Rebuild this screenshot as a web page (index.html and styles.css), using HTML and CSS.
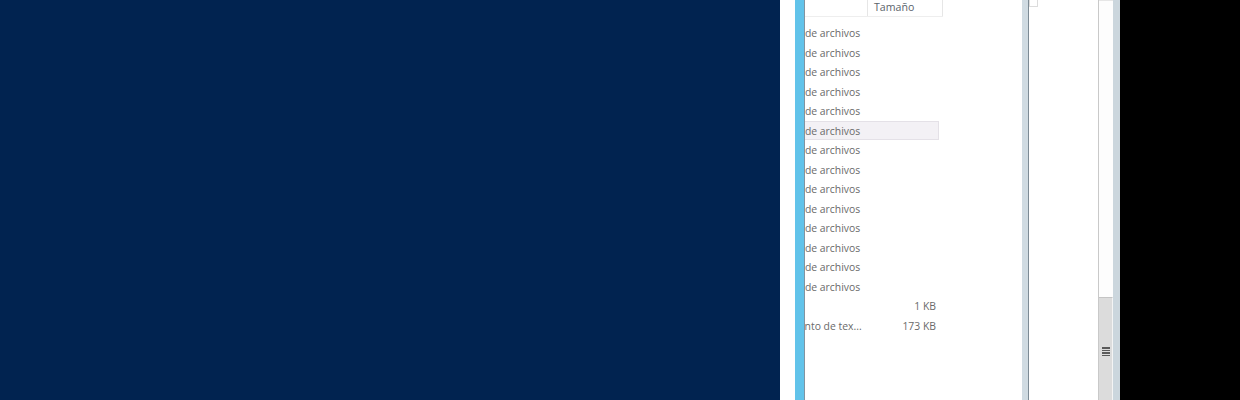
FILE: index.html
```html
<!DOCTYPE html>
<html lang="es">
<head>
<meta charset="utf-8">
<title>Explorador</title>
<link rel="stylesheet" href="styles.css">
</head>
<body>
<div class="screen">
  <div class="desktop"></div>
  <div class="window">
    <div class="frame-left"></div>
    <div class="accent"></div>
    <div class="list">
      <div class="table">
        <div class="header">
          <div class="h-type"></div>
          <div class="h-size">Tamaño</div>
        </div>
        <div class="rows">
          <div class="row"><span class="c-type">Carpeta de archivos</span><span class="c-size"></span></div>
          <div class="row"><span class="c-type">Carpeta de archivos</span><span class="c-size"></span></div>
          <div class="row"><span class="c-type">Carpeta de archivos</span><span class="c-size"></span></div>
          <div class="row"><span class="c-type">Carpeta de archivos</span><span class="c-size"></span></div>
          <div class="row"><span class="c-type">Carpeta de archivos</span><span class="c-size"></span></div>
          <div class="row hover"><span class="c-type">Carpeta de archivos</span><span class="c-size"></span></div>
          <div class="row"><span class="c-type">Carpeta de archivos</span><span class="c-size"></span></div>
          <div class="row"><span class="c-type">Carpeta de archivos</span><span class="c-size"></span></div>
          <div class="row"><span class="c-type">Carpeta de archivos</span><span class="c-size"></span></div>
          <div class="row"><span class="c-type">Carpeta de archivos</span><span class="c-size"></span></div>
          <div class="row"><span class="c-type">Carpeta de archivos</span><span class="c-size"></span></div>
          <div class="row"><span class="c-type">Carpeta de archivos</span><span class="c-size"></span></div>
          <div class="row"><span class="c-type">Carpeta de archivos</span><span class="c-size"></span></div>
          <div class="row"><span class="c-type">Carpeta de archivos</span><span class="c-size"></span></div>
          <div class="row"><span class="c-type"></span><span class="c-size">1 KB</span></div>
          <div class="row"><span class="c-type">Documento de tex...</span><span class="c-size">173 KB</span></div>
        </div>
      </div>
    </div>
    <div class="splitter"></div>
    <div class="pane"><div class="corner"></div></div>
    <div class="scrollbar">
      <div class="track"></div>
      <div class="thumb"><div class="grip"><i></i><i></i><i></i><i></i></div></div>
    </div>
    <div class="frame-right"></div>
  </div>
  <div class="offscreen"></div>
</div>
</body>
</html>
```

FILE: styles.css
```css
html, body {
  margin: 0;
  padding: 0;
  background: #000;
}
.screen {
  display: flex;
  width: 1240px;
  height: 400px;
  overflow: hidden;
  font-family: "Open Sans", "Noto Sans", sans-serif;
  font-size: 10.4px;
  color: #6a6a6a;
}
.desktop {
  width: 780px;
  background: #012350;
}
.window {
  display: flex;
  width: 340px;
  height: 400px;
}
.frame-left {
  width: 15px;
  background: #ffffff;
}
.accent {
  width: 9px;
  background: #62c3ea;
  border-right: 1px solid #8294a0;
}
.list {
  width: 217px;
  overflow: hidden;
  background: #ffffff;
}
.table {
  margin-left: -41px;
  width: 179px;
}
.header {
  display: flex;
  height: 17px;
  box-sizing: border-box;
  border-bottom: 1px solid #eeeeee;
}
.h-type {
  width: 104px;
  box-sizing: border-box;
  border-right: 1px solid #e6e6e6;
}
.h-size {
  width: 75px;
  box-sizing: border-box;
  border-right: 1px solid #e6e6e6;
  padding-left: 6px;
  line-height: 14px;
  font-size: 10.6px;
  color: #5a636b;
}
.rows {
  padding-top: 6.25px;
}
.row {
  display: flex;
  align-items: center;
  height: 19.5px;
  width: 175px;
  box-sizing: border-box;
  white-space: nowrap;
}
.row.hover {
  background: #f3f1f5;
  border: 1px solid #e4e1e7;
}
.c-type {
  width: 104px;
  flex: none;
  overflow: hidden;
}
.c-size {
  width: 68px;
  flex: none;
  text-align: right;
}
.row.hover .c-type {
  margin-left: -1px;
}
.splitter {
  width: 6px;
  background: #d0dbe2;
  border-right: 1px solid #7d8b95;
}
.pane {
  width: 69px;
  background: #ffffff;
}
.corner {
  width: 7px;
  height: 6px;
  border: 1px solid #dcdcdc;
  border-top: none;
}
.scrollbar {
  width: 15px;
  box-sizing: border-box;
  border-left: 1px solid #c9c9c9;
  display: flex;
  flex-direction: column;
  background: #fdfdfd;
}
.track {
  height: 297px;
  box-sizing: border-box;
  border-top: 1px solid #e6e6e6;
}
.thumb {
  flex: 1;
  background: #dcdcdc;
  border-top: 1px solid #c4c4c4;
  border-right: 1px solid #f4f4f4;
  display: flex;
  justify-content: center;
  padding-top: 49px;
}
.grip {
  display: flex;
  flex-direction: column;
  gap: 1px;
  width: 8px;
}
.grip i {
  display: block;
  height: 1.5px;
  background: #5a5a5a;
}
.frame-right {
  width: 7px;
  background: #cbd6dd;
}
.offscreen {
  flex: 1;
  background: #000000;
}
```
